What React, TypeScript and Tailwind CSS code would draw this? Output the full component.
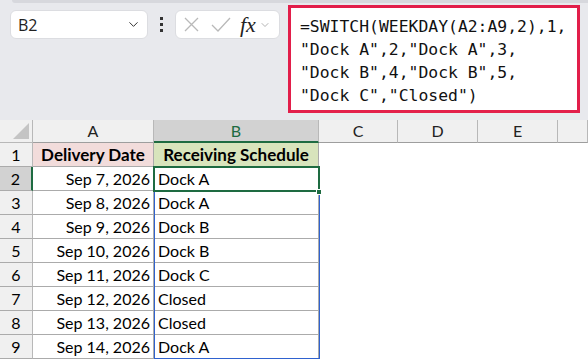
import { ChevronDown } from 'lucide-react'

const rows = [
  { n: 2, date: 'Sep 7, 2026', dock: 'Dock A' },
  { n: 3, date: 'Sep 8, 2026', dock: 'Dock A' },
  { n: 4, date: 'Sep 9, 2026', dock: 'Dock B' },
  { n: 5, date: 'Sep 10, 2026', dock: 'Dock B' },
  { n: 6, date: 'Sep 11, 2026', dock: 'Dock C' },
  { n: 7, date: 'Sep 12, 2026', dock: 'Closed' },
  { n: 8, date: 'Sep 13, 2026', dock: 'Closed' },
  { n: 9, date: 'Sep 14, 2026', dock: 'Dock A' },
]

const formula = [
  '=SWITCH(WEEKDAY(A2:A9,2),1,',
  '"Dock A",2,"Dock A",3,',
  '"Dock B",4,"Dock B",5,',
  '"Dock C","Closed")',
]

const cols = 'grid-cols-[33px_121px_165px_79px_80px_80px_1fr]'
const cell = 'h-[24px] border-r border-b border-[#ababab] flex items-center text-[16px] text-black'
const empty = 'h-[24px] bg-white'

export default function App() {
  return (
    <div className="w-[588px] h-[363px] overflow-hidden bg-white font-['Lato',sans-serif]">

      {/* ── Formula bar ───────────────────────────────────── */}
      <div className="relative h-[120px] bg-[#e8e9ed]">
        <div className="absolute left-[12px] top-0 right-0 h-[3px] rounded-bl-md bg-[#d7d8dd]" />
        <div className="flex items-start pt-[10px] pl-[10px]">
          <div className="w-[138px] h-[29px] rounded-md bg-white border border-[#dcdde1] flex items-center justify-between pl-[7px] pr-[6px]">
            <span className="text-[16px] text-[#222] font-['Open_Sans',sans-serif]">B2</span>
            <ChevronDown size={15} strokeWidth={1.6} className="text-[#333]" />
          </div>
          <div className="w-[27px] h-[29px] flex flex-col items-center justify-center gap-[3px]">
            <span className="w-[3px] h-[3px] bg-[#333]" />
            <span className="w-[3px] h-[3px] bg-[#333]" />
            <span className="w-[3px] h-[3px] bg-[#333]" />
          </div>
          <div className="w-[105px] h-[29px] rounded-md bg-white border border-[#dcdde1] flex items-center pl-[8px] gap-[8px]">
            <svg width="15" height="15" viewBox="0 0 15 15" className="text-[#b9b9b9]">
              <path d="M1 1 L14 14 M14 1 L1 14" stroke="currentColor" strokeWidth="1.3" fill="none" />
            </svg>
            <svg width="20" height="15" viewBox="0 0 20 15" className="text-[#b9b9b9] ml-[4px]">
              <path d="M1 8 L7 14 L19 1" stroke="currentColor" strokeWidth="1.3" fill="none" />
            </svg>
            <span className="ml-[1px] italic text-[22px] leading-none text-[#222] font-['Liberation_Serif',serif]">fx</span>
            <ChevronDown size={12} strokeWidth={1.5} className="text-[#999] -ml-[5px]" />
          </div>
          <div className="ml-[8px] -mt-[5px] w-[292px] h-[108px] border-[3px] border-[#e21e4a] bg-white pl-[9px] pt-[7px]">
            {formula.map((line) => (
              <div key={line} className="h-[23px] leading-[23px] text-[16.4px] text-[#111] whitespace-pre font-['DejaVu_Sans_Mono',monospace]">
                {line}
              </div>
            ))}
          </div>
        </div>
      </div>

      {/* ── Grid ──────────────────────────────────────────── */}
      <div className="relative">
        <div className={`grid ${cols}`}>
          {/* header row */}
          <div className="h-[23px] bg-[#f0f0f0] border-r border-b border-[#b8b8b8] flex items-end justify-end p-[3px]">
            <div className="w-0 h-0 border-l-[16px] border-l-transparent border-b-[16px] border-b-[#c4c4c4]" />
          </div>
          {['A', 'B', 'C', 'D', 'E', ''].map((c) => (
            <div
              key={c || 'F'}
              className={`h-[23px] flex items-center justify-center text-[16px] border-r ${
                c === 'B'
                  ? 'bg-[#d2d2d2] border-[#b8b8b8] border-b-2 border-b-[#1e6b41] text-[#1e6b41]'
                  : 'bg-[#f0f0f0] border-[#b8b8b8] border-b border-b-[#9e9e9e] text-[#222]'
              }`}
            >
              {c}
            </div>
          ))}

          {/* row 1 */}
          <div className={`${cell} justify-center bg-[#f0f0f0] border-r-[#b8b8b8]`}>1</div>
          <div className={`${cell} justify-center bg-[#f2dcdb] font-bold text-[17px]`}>Delivery Date</div>
          <div className={`${cell} justify-center bg-[#d8e4bc] font-bold text-[17px]`}>Receiving Schedule</div>
          <div className={empty} />
          <div className={empty} />
          <div className={empty} />
          <div className={empty} />

          {rows.map((r) => (
            <div key={r.n} className="contents">
              <div
                className={`${cell} justify-center ${
                  r.n === 2 ? 'bg-[#d2d2d2] border-r-2 border-r-[#1e6b41]' : 'bg-[#f0f0f0] border-r-[#b8b8b8]'
                }`}
              >
                {r.n}
              </div>
              <div className={`${cell} justify-end pr-[3px]`}>{r.date}</div>
              <div className={`${cell} pl-[4px]`}>{r.dock}</div>
              <div className={empty} />
              <div className={empty} />
              <div className={empty} />
              <div className={empty} />
            </div>
          ))}
        </div>

        {/* spill range outline B2:B9 */}
        <div className="absolute left-[154px] top-[47px] w-[166px] h-[192px] border border-[#2f62cf] pointer-events-none" />
        {/* active cell B2 */}
        <div className="absolute left-[153px] top-[46px] w-[167px] h-[26px] border-2 border-[#1e6b41] pointer-events-none" />
        <div className="absolute left-[316px] top-[69px] w-[6px] h-[6px] bg-[#1e6b41] border border-white pointer-events-none" />
      </div>
    </div>
  )
}
